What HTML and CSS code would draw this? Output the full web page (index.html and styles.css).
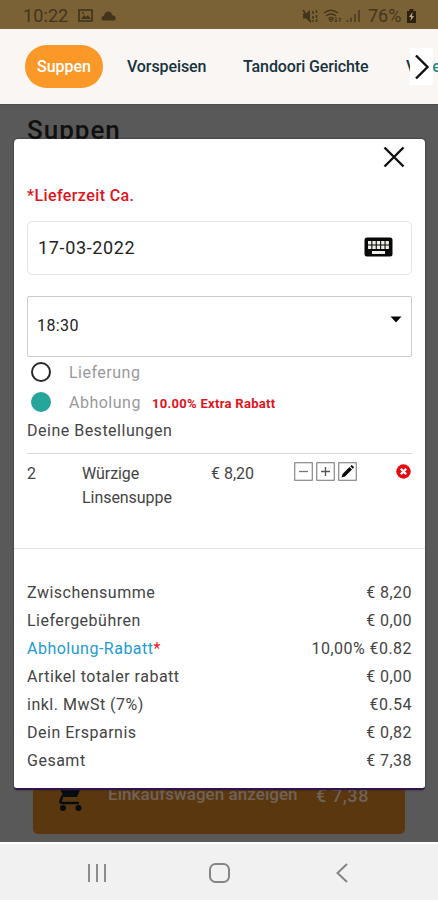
FILE: index.html
```html
<!DOCTYPE html>
<html lang="de">
<head>
<meta charset="utf-8">
<title>Warenkorb</title>
<link rel="stylesheet" href="styles.css">
</head>
<body>
<div class="phone">
  <header class="status">
    <span class="clock">10:22</span>
    <svg class="pic" width="15" height="13" viewBox="0 0 15 13"><rect x="1" y="1" width="13" height="11" fill="none" stroke="currentColor" stroke-width="1.7"/><path d="M3 10l3-4 2 2 2-2 3 4z" fill="currentColor"/><circle cx="5" cy="4" r="1" fill="currentColor"/></svg>
    <svg class="cloud" width="15" height="10" viewBox="0 0 15 10"><path d="M2 9.500Q0 9 .3 7T3 4.500Q4 .5 7.500.5T11 4q3.500.5 3.700 3T13 9.500z" fill="currentColor"/></svg>
    <div class="signals">
      <svg width="16" height="14" viewBox="0 0 16 14"><path d="M1 4.500h3l4-3.500v12l-4-3.500H1z" fill="currentColor"/><path d="M1 1l8 12M11 2v3M11 7v3M11 11v2M14.500 1v3M14.500 6v3M14.500 10v3" stroke="currentColor" stroke-width="1.500" fill="none"/></svg>
      <svg class="wifi" width="19" height="14" viewBox="0 0 19 14"><path d="M1 4q7-5.500 14 0M3 7q5-4 10 0M5.500 9.500q2.500-2 5 0" fill="none" stroke="currentColor" stroke-width="1.300"/><path d="M8 13l-2-2.500h4zM13 8v5M11.500 11.500L13 13l1.500-1.500M17 13V9M15.800 10L17 9l1 1" fill="none" stroke="currentColor"/></svg>
      <svg class="bars" width="15" height="13" viewBox="0 0 15 13"><path d="M1.500 13v-2M5 13V8.500M9 13V5M13 13V1" stroke="currentColor" stroke-width="2"/></svg>
      <span class="percent">76%</span>
      <svg class="battery" width="11" height="14" viewBox="0 0 11 14"><path d="M3.500 0h4v2H10v12H1V2h2.500z" fill="#2c210f"/><path d="M6.500 3L3 8h2l-.5 4L8 7H6z" fill="#b8a680"/></svg>
    </div>
  </header>
  <nav class="tabs">
    <a class="tab active">Suppen</a>
    <a class="tab starters">Vorspeisen</a>
    <a class="tab tandoori">Tandoori Gerichte</a>
    <a class="tab more">V<span class="rest">e</span></a>
    <span class="next"><svg width="14" height="26" viewBox="0 0 14 26"><path d="M1 1.500L12.500 13 1 24.500" fill="none" stroke="#111" stroke-width="2.400"/></svg></span>
  </nav>
  <main class="page">
    <h1>Suppen</h1>
    <div class="cart">
      <svg class="trolley" width="26" height="31" viewBox="0 0 26 31"><path d="M5 4h20l-5 12H8z" fill="#060d10"/><path d="M6 14L3.500 20q-.5 2 1.500 2h17" fill="none" stroke="#060d10" stroke-width="2.400"/><path d="M3 8h7v8H7z" fill="#060d10"/><circle cx="6" cy="27" r="3" fill="#060d10"/><circle cx="21.500" cy="27" r="3" fill="#060d10"/></svg>
      <span class="cart-label">Einkaufswagen anzeigen</span>
      <span class="cart-price">€ 7,38</span>
    </div>
    <section class="dialog">
      <svg class="close" width="22" height="22" viewBox="0 0 22 22"><path d="M1.500 1.500l19 19M20.500 1.500l-19 19" stroke="#111" stroke-width="2.400"/></svg>
      <div class="caption">*Lieferzeit Ca.</div>
      <div class="field date"><span>17-03-2022</span>
        <svg width="29" height="20" viewBox="0 0 29 20"><rect x=".5" y=".5" width="28" height="19" rx="2.500" fill="#080808"/><g fill="#eef0e8"><path d="M4 4h3.300v3.500H4zM8.400 4h3.300v3.500H8.400zM12.800 4h3.300v3.500h-3.300zM17.200 4h3.300v3.500h-3.300zM21.600 4h3.300v3.500h-3.300zM4 8.500h3.300V12H4zM8.400 8.500h3.300V12H8.400zM12.800 8.500h3.300V12h-3.300zM17.200 8.500h3.300V12h-3.300zM21.600 8.500h3.300V12h-3.300zM8 14h13v3H8z"/></g></svg>
      </div>
      <div class="field time"><span>18:30</span><svg width="12" height="7" viewBox="0 0 12 7"><path d="M.5.500h11L6 6.500z" fill="#080808"/></svg></div>
      <div class="option delivery"><i class="dot"></i><span>Lieferung</span></div>
      <div class="option pickup"><i class="dot filled"></i><span>Abholung</span><b>10.00% Extra Rabatt</b></div>
      <div class="orders">Deine Bestellungen</div>
      <div class="item">
        <span class="count">2</span>
        <span class="name">Würzige<br>Linsensuppe</span>
        <span class="price">€ 8,20</span>
        <span class="tools">
          <svg width="19" height="19" viewBox="0 0 19 19"><rect x=".75" y=".75" width="17.500" height="17.500" fill="#fff" stroke="#707070"/><path d="M5 9.500h9" stroke="#777" stroke-width="1.300"/></svg>
          <svg width="19" height="19" viewBox="0 0 19 19"><rect x=".75" y=".75" width="17.500" height="17.500" fill="#fff" stroke="#707070"/><path d="M5 9.500h9M9.500 5v9" stroke="#555" stroke-width="1.300"/></svg>
          <svg width="19" height="19" viewBox="0 0 19 19"><rect x=".75" y=".75" width="17.500" height="17.500" fill="#fff" stroke="#707070"/><path d="M3.500 15.500l1-3.500 7-7 2.500 2.500-7 7zM12.300 4.200l1.500-1.300 2.300 2.400-1.300 1.400z" fill="#080808"/></svg>
        </span>
        <svg class="remove" width="15" height="15" viewBox="0 0 15 15"><circle cx="7.500" cy="7.500" r="7.200" fill="#e9090f"/><path d="M4.800 4.800l5.400 5.400M10.200 4.800l-5.400 5.400" stroke="#fff" stroke-width="2.300"/></svg>
      </div>
      <div class="totals">
        <div class="row"><span>Zwischensumme</span><span class="sum">€ 8,20</span></div>
        <div class="row"><span>Liefergebühren</span><span class="sum">€ 0,00</span></div>
        <div class="row"><span class="link">Abholung-Rabatt<em>*</em></span><span class="sum">10,00% €0.82</span></div>
        <div class="row"><span>Artikel totaler rabatt</span><span class="sum">€ 0,00</span></div>
        <div class="row"><span>inkl. MwSt (7%)</span><span class="sum">€0.54</span></div>
        <div class="row"><span>Dein Ersparnis</span><span class="sum">€ 0,82</span></div>
        <div class="row"><span>Gesamt</span><span class="sum">€ 7,38</span></div>
      </div>
    </section>
  </main>
  <footer class="navbar">
    <svg width="20" height="20" viewBox="0 0 20 20"><path d="M2 1v18M10 1v18M18 1v18" stroke="#8c8c8c" stroke-width="2"/></svg>
    <svg class="home" width="21" height="20" viewBox="0 0 21 20"><rect x="1" y="1" width="19" height="18" rx="5.500" fill="none" stroke="#858585" stroke-width="2"/></svg>
    <svg width="12" height="20" viewBox="0 0 12 20"><path d="M11 1L1.500 10 11 19" fill="none" stroke="#858585" stroke-width="2"/></svg>
  </footer>
</div>
</body>
</html>
```
FILE: styles.css
```css
* { box-sizing: border-box; }
body { margin: 0; font-family: Roboto, sans-serif; font-size: 16px; color: #444; background: #f1f1f1; }
svg { display: block; flex: none; }
.phone { width: 438px; height: 900px; display: flex; flex-direction: column; overflow: hidden; }
.status { height: 29px; background: #7a6236; color: #43351c; display: flex; align-items: center; padding: 2px 21px 0 23px; flex: none; }
.clock { font-size: 18px; letter-spacing: .1px; width: 46px; }
.pic { margin-left: 9px; }
.cloud { margin-left: 8px; }
.signals { margin-left: auto; display: flex; align-items: center; }
.wifi { margin-left: 5px; }
.bars { margin-left: 4px; opacity: .7; }
.percent { font-size: 18px; margin-left: 7px; width: 34px; }
.battery { margin-left: 4px; }
.tabs { position: relative; height: 75px; flex: none; display: flex; align-items: center; background: #f9f6f4; color: #17333e; font-size: 16px; font-weight: 500; white-space: nowrap; overflow: hidden; padding-left: 25px; }
.tab { flex: none; }
.active { width: 78px; height: 43px; line-height: 43px; border-radius: 22px; background: #fa9928; color: #fff; text-align: center; }
.starters { margin-left: 24px; width: 80px; letter-spacing: -.1px; }
.tandoori { margin-left: 36px; width: 126px; letter-spacing: -.12px; }
.more { margin-left: 37px; }
.rest { margin-left: 16px; color: #2f8584; letter-spacing: -4px; }
.next { position: absolute; left: 410px; top: 19px; width: 23px; height: 37px; background: #fff; display: flex; align-items: center; justify-content: flex-end; padding-right: 4px; }
.page { position: relative; height: 738px; flex: none; background: #595959; padding: 10px 13px 0; display: flex; flex-direction: column; overflow: hidden; border-top: 1px solid #4c4c4c; }
h1 { margin: 0; padding-left: 14px; font-size: 26px; line-height: 30px; font-weight: 500; color: #101010; letter-spacing: 1px; }
.cart { margin: auto 20px 8px 20px; height: 48px; background: #5b3710; border-radius: 5px; display: flex; color: #706357; position: relative; flex: none; }
.trolley { margin: -5px 0 0 24px; }
.cart-label { margin: -4px 0 0 25px; width: 189px; font-size: 17px; line-height: 24px; font-weight: 500; white-space: nowrap; letter-spacing: .05px; }
.cart-price { margin: -2px 0 0 19px; font-size: 18px; line-height: 24px; font-weight: 500; white-space: nowrap; letter-spacing: .6px; }
.dialog { position: absolute; left: 14px; top: 34px; width: 411px; height: 651px; background: #fff; border-radius: 4px; border-bottom: 2px solid #33134b; box-shadow: 0 0 2px #222; padding: 7px 13px 0; display: flex; flex-direction: column; }
.close { align-self: flex-end; margin-right: 7px; }
.caption { margin-top: 17px; height: 22px; line-height: 22px; color: #e0141b; font-weight: 500; letter-spacing: .4px; }
.field { display: flex; justify-content: space-between; border: 1px solid #ddd; color: #222; width: 385px; }
.date { margin-top: 14px; height: 54px; border-radius: 5px; align-items: center; padding: 0 18px 2px 10px; font-size: 18px; letter-spacing: .65px; border-color: #e5e5e5; }
.time { margin-top: 21px; height: 61px; border-color: #ccc; border-radius: 2px; padding: 19px 9px 0; line-height: 20px; letter-spacing: .4px; }
.option { height: 30px; display: flex; align-items: center; color: #999; letter-spacing: .5px; }
.dot { width: 20px; height: 20px; margin: 0 18px 0 4px; border: 2px solid #282828; border-radius: 50%; flex: none; }
.filled { background: #26a69a; border-color: #26a69a; }
.option b { margin-left: 11px; font-size: 13px; letter-spacing: .3px; color: #e1131c; padding-top: 3px; }
.orders { height: 37px; line-height: 27px; border-bottom: 1px solid #d8d8d8; letter-spacing: .5px; }
.item { display: flex; height: 95px; margin: 0 -13px; padding: 8px 14px 0 13px; border-bottom: 1px solid #e2e2e2; line-height: 24px; }
.count { width: 55px; }
.name { width: 129px; letter-spacing: -.05px; }
.price { width: 83px; }
.tools { display: flex; gap: 3px; }
.remove { margin: 2px 0 0 auto; }
.totals { padding-top: 30px; }
.row { height: 28px; line-height: 28px; display: flex; justify-content: space-between; letter-spacing: .5px; }
.sum { letter-spacing: .45px; }
.link { color: #219bd2; }
em { color: #e7151c; font-style: normal; }
.navbar { height: 58px; background: #f1f1f1; border-top: 2px solid #fff; display: flex; align-items: center; justify-content: space-between; padding: 1px 90px 0 87px; flex: none; }
.home { margin-left: -4px; }
```
